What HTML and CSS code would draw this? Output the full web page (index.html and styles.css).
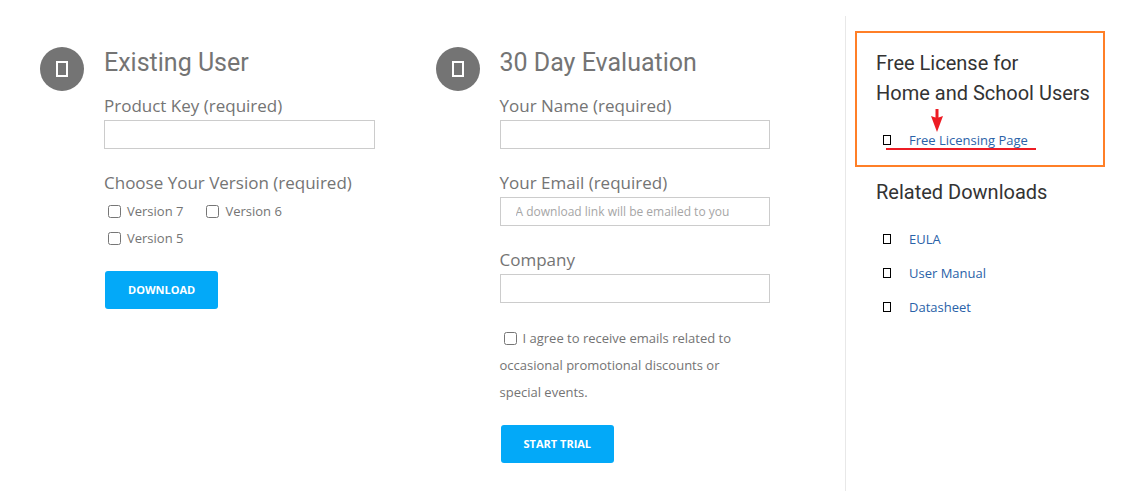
FILE: index.html
```html
<!DOCTYPE html>
<html lang="en">
<head>
<meta charset="utf-8">
<title>Downloads</title>
<link rel="stylesheet" href="styles.css">
</head>
<body>
<div class="page">
  <main class="forms">
    <form class="panel">
      <span class="badge"><svg width="12" height="16" viewBox="0 0 12 16"><rect x="1" y="1" width="10" height="14" fill="none" stroke="#fff" stroke-width="2"/></svg></span>
      <div class="body">
        <h2 class="title">Existing User</h2>
        <div class="field">
          <label class="label" for="key">Product Key (required)</label>
          <input class="input" id="key" type="text">
        </div>
        <fieldset class="versions">
          <legend class="label">Choose Your Version (required)</legend>
          <div class="options">
            <label class="option"><input class="check" type="checkbox">Version 7</label>
            <label class="option"><input class="check" type="checkbox">Version 6</label>
            <label class="option"><input class="check" type="checkbox">Version 5</label>
          </div>
        </fieldset>
        <button class="button" type="button">DOWNLOAD</button>
      </div>
    </form>
    <form class="panel">
      <span class="badge"><svg width="12" height="16" viewBox="0 0 12 16"><rect x="1" y="1" width="10" height="14" fill="none" stroke="#fff" stroke-width="2"/></svg></span>
      <div class="body">
        <h2 class="title">30 Day Evaluation</h2>
        <div class="field">
          <label class="label" for="name">Your Name (required)</label>
          <input class="input" id="name" type="text">
        </div>
        <div class="field">
          <label class="label" for="email">Your Email (required)</label>
          <input class="input" id="email" type="email" placeholder="A download link will be emailed to you">
        </div>
        <div class="field">
          <label class="label" for="company">Company</label>
          <input class="input" id="company" type="text">
        </div>
        <label class="consent"><input class="check" type="checkbox">I agree to receive emails related to occasional promotional discounts or special events.</label>
        <button class="button" type="button">START TRIAL</button>
      </div>
    </form>
  </main>
  <aside class="sidebar">
    <section class="block marked">
      <h3 class="heading">Free License for<br>Home and School Users</h3>
      <ul class="links">
        <li class="item pointed">
          <svg class="glyph" width="8" height="10" viewBox="0 0 8 10"><rect x=".5" y=".5" width="7" height="9"/></svg>
          <a class="link" href="#">Free Licensing Page</a>
          <svg class="arrow" width="12" height="23" viewBox="0 0 12 23"><path d="M4.500 0h3v8.500l4.500-1.500L6 23 0 7l4.500 1.500z" fill="#ed1c24"/></svg>
        </li>
      </ul>
    </section>
    <section class="block">
      <h3 class="heading">Related Downloads</h3>
      <ul class="links">
        <li class="item"><svg class="glyph" width="8" height="10" viewBox="0 0 8 10"><rect x=".5" y=".5" width="7" height="9"/></svg><a class="link" href="#">EULA</a></li>
        <li class="item"><svg class="glyph" width="8" height="10" viewBox="0 0 8 10"><rect x=".5" y=".5" width="7" height="9"/></svg><a class="link" href="#">User Manual</a></li>
        <li class="item"><svg class="glyph" width="8" height="10" viewBox="0 0 8 10"><rect x=".5" y=".5" width="7" height="9"/></svg><a class="link" href="#">Datasheet</a></li>
      </ul>
    </section>
  </aside>
</div>
</body>
</html>
```

FILE: styles.css
```css
* {
  box-sizing: border-box;
}

body {
  margin: 0;
  background: #fff;
  color: #747474;
  font-family: "Open Sans", "Noto Sans", sans-serif;
  font-size: 13px;
  line-height: 27px;
}

.page {
  display: grid;
  grid-template-columns: minmax(0, 845fr) minmax(0, 291fr);
  min-height: 100vh;
  padding: 16px 0 2px;
}

.forms {
  display: grid;
  grid-template-columns: repeat(2, minmax(0, 1fr));
  gap: 61px;
  padding: 31px 75px 0 40px;
}

.panel {
  display: flex;
  align-items: flex-start;
  gap: 20px;
}

.badge {
  display: flex;
  flex: none;
  align-items: center;
  justify-content: center;
  width: 44px;
  height: 44px;
  border-radius: 50%;
  background: #747474;
}

.body {
  flex: 1;
  min-width: 0;
}

.title {
  margin: 0 0 17px;
  font: 400 25px/32px Roboto, sans-serif;
}

.field {
  margin-bottom: 24px;
}

.label {
  display: block;
  padding: 0 0 4px;
  font-size: 17px;
  line-height: 20px;
}

.input {
  display: block;
  width: 100%;
  height: 29px;
  padding: 0 15px;
  border: 1px solid #ccc;
  border-radius: 0;
  background: #fff;
  color: #747474;
  font: inherit;
  font-size: 12px;
}

.input::placeholder {
  color: #a6a6a6;
}

.versions {
  margin: 0 0 19px;
  padding: 0;
  border: 0;
}

.options {
  display: flex;
  flex-wrap: wrap;
  column-gap: 19px;
  max-width: 240px;
  padding-top: 1px;
}

.check {
  width: 13px;
  height: 13px;
  margin: 0 6px 0 4px;
  vertical-align: -2px;
}

.consent {
  display: block;
  margin: -2px 0 19px;
  padding-right: 24px;
}

.button {
  display: block;
  height: 38px;
  margin-left: 1px;
  padding: 0 23px;
  border: 0;
  border-radius: 3px;
  background: #03a9f8;
  color: #fff;
  font: 700 11px/38px "Open Sans", "Noto Sans", sans-serif;
}

.sidebar {
  padding: 15px 31px 0 9px;
  border-left: 1px solid #e8e8e8;
}

.block {
  padding: 10px 12px 0 21px;
}

.marked {
  padding: 15px 12px 8px 19px;
  border: 2px solid #ff7f27;
}

.heading {
  margin: 0 0 15px;
  color: #333;
  font: 400 20px/30px Roboto, sans-serif;
}

.links {
  margin: 0;
  padding: 0;
  list-style: none;
}

.item {
  display: flex;
  align-items: center;
  gap: 18px;
  height: 34px;
  padding-left: 7px;
}

.glyph {
  flex: none;
  fill: none;
  stroke: #000;
}

.link {
  color: #2a62a8;
  text-decoration: none;
}

.pointed {
  position: relative;
}

.pointed::after {
  position: absolute;
  bottom: 7px;
  left: 10px;
  width: 150px;
  height: 2px;
  background: #ed1c24;
  content: "";
}

.arrow {
  position: absolute;
  top: -14px;
  left: 55px;
}
```
